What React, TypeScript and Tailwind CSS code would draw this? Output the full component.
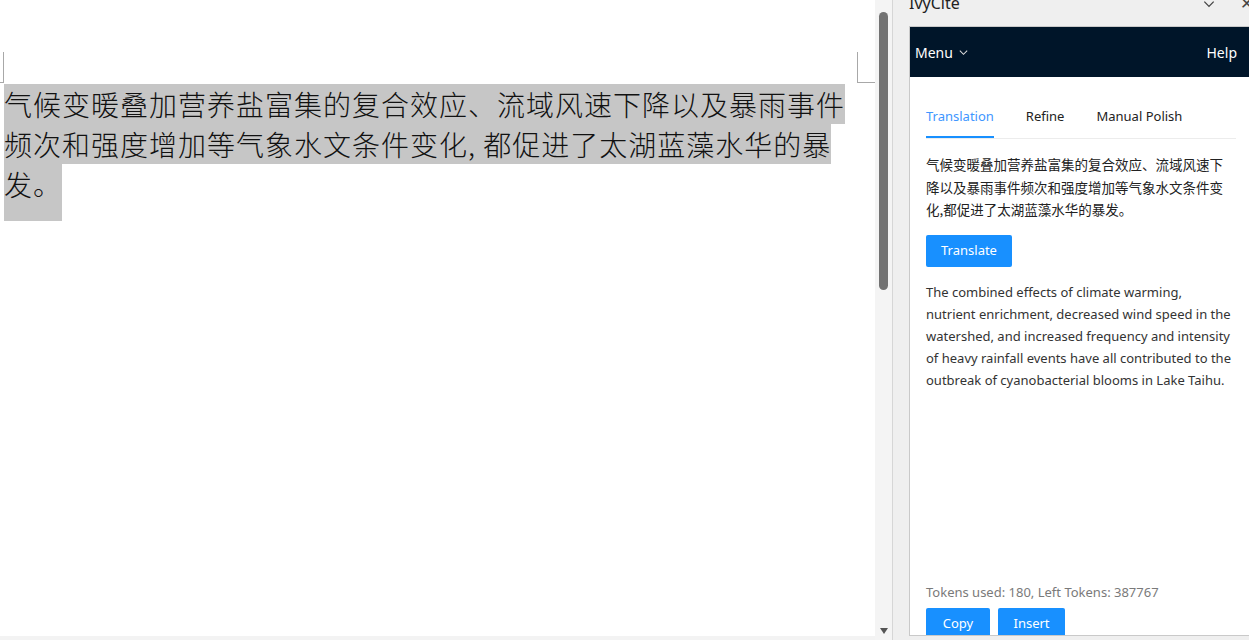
import React, { useState } from 'react';

const ui = { fontFamily: '"Noto Sans", "Noto Sans CJK SC", sans-serif' };
const doc = { fontFamily: '"Noto Sans CJK SC", "Noto Sans", sans-serif' };

const ChevronDown = ({ className }: { className?: string }) => (
  <svg viewBox="0 0 12 12" className={className} fill="none" stroke="currentColor" strokeWidth="1.1">
    <path d="M2 4l4 4 4-4" />
  </svg>
);

const tabs = ['Translation', 'Refine', 'Manual Polish'];

const DocLine = ({ children, tall }: { children: React.ReactNode; tall?: boolean }) => (
  <div className={`w-fit bg-[#c6c6c6] ${tall ? 'h-[57px]' : 'h-[40px]'}`}>
    <div className="h-[40px] leading-[40px] text-[28px] font-light tracking-[1px] text-[#111] whitespace-nowrap">{children}</div>
  </div>
);

export default function App() {
  const [tab, setTab] = useState('Translation');

  return (
    <div className="flex h-[640px] w-[1249px] overflow-hidden bg-white" style={ui}>
      {/* Document */}
      <div className="flex w-[875px] flex-col">
        <div className="flex-1 bg-white">
          <div className="flex justify-between pt-[52px]">
            <div className="h-[31px] w-[4px] border-r border-b border-[#a8a8a8]" />
            <div className="h-[31px] w-[18px] border-l border-b border-[#a8a8a8]" />
          </div>
          <div className="pl-[4px] pt-[1px]" style={doc}>
            <DocLine>气候变暖叠加营养盐富集的复合效应、流域风速下降以及暴雨事件</DocLine>
            <DocLine>频次和强度增加等气象水文条件变化, 都促进了太湖蓝藻水华的暴</DocLine>
            <DocLine tall>发。</DocLine>
          </div>
        </div>
        <div className="h-[4px] bg-[#f3f3f3]" />
      </div>

      {/* Scrollbar */}
      <div className="flex w-[18px] flex-col items-center justify-between border-r border-[#d6d6d6] bg-[#f4f4f4] pt-[12px] pb-[6px]">
        <div className="h-[278px] w-[9px] rounded-full bg-[#737373]" />
        <div className="h-0 w-0 border-x-[4px] border-t-[6px] border-x-transparent border-t-[#555]" />
      </div>

      {/* Task pane */}
      <div className="flex flex-1 flex-col bg-[#efefef]">
        <div className="relative h-[26px] shrink-0">
          <span className="absolute left-[16px] top-[-9px] text-[16px] text-[#222]">IvyCite</span>
          <ChevronDown className="absolute right-[33px] top-[-3px] h-[14px] w-[14px] text-[#444]" />
          <span className="absolute right-[-4px] top-[-9px] text-[16px] text-[#444]">✕</span>
        </div>
        <div className="ml-[16px] flex flex-1 flex-col overflow-hidden border-t border-l border-b border-[#c9c9c9] bg-white">
          <div className="flex h-[50px] shrink-0 items-center justify-between bg-[#001529] pl-[5px] pr-[12px] text-[14px] text-white">
            <span className="flex items-center gap-[5px]">
              Menu <ChevronDown className="h-[11px] w-[11px] text-[#ddd]" />
            </span>
            <span>Help</span>
          </div>
          <div className="flex flex-1 flex-col px-[16px] pt-[29px] text-[13px] text-[#333]">
            <div className="mr-[-3px] flex gap-[32px] border-b border-[#ececec]">
              {tabs.map(t => (
                <button
                  key={t}
                  onClick={() => setTab(t)}
                  className={`pb-[10px] text-[13px] leading-[20px] ${tab === t ? 'border-b-[2px] border-[#1890ff] text-[#4096ff]' : 'border-b-[2px] border-transparent text-[#222]'}`}
                >
                  {t}
                </button>
              ))}
            </div>
            <p className="mt-[14px] leading-[22.5px] text-[13.5px] text-[#222]" style={doc}>
              气候变暖叠加营养盐富集的复合效应、流域风速下降以及暴雨事件频次和强度增加等气象水文条件变化,都促进了太湖蓝藻水华的暴发。
            </p>
            <button className="mt-[14px] h-[32px] w-[86px] rounded-[2px] bg-[#1890ff] text-[13px] text-white">Translate</button>
            <p className="mt-[14px] leading-[22px] text-[#333]">
              The combined effects of climate warming, nutrient enrichment, decreased wind speed in the watershed, and increased frequency and intensity of heavy rainfall events have all contributed to the outbreak of cyanobacterial blooms in Lake Taihu.
            </p>
            <div className="flex-1" />
            <p className="leading-[20px] text-[#7a7a7a]">Tokens used: 180, Left Tokens: 387767</p>
            <div className="mt-[6px] mb-[-5px] flex gap-[8px]">
              <button className="h-[32px] w-[64px] rounded-[2px] bg-[#1890ff] text-[13px] text-white">Copy</button>
              <button className="h-[32px] w-[67px] rounded-[2px] bg-[#1890ff] text-[13px] text-white">Insert</button>
            </div>
          </div>
        </div>
        <div className="h-[4px] shrink-0" />
      </div>
    </div>
  );
}
